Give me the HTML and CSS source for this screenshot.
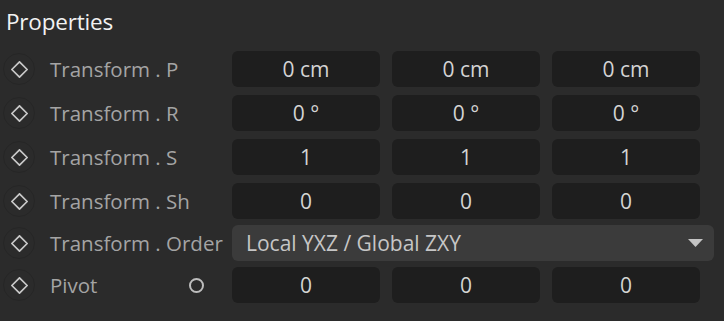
FILE: index.html
```html
<!DOCTYPE html>
<html lang="en">
<head>
  <meta charset="UTF-8">
  <title>Properties</title>
  <link rel="stylesheet" href="styles.css">
</head>
<body>
<div class="panel">
  <h1 class="titulo">Properties</h1>

  <div class="linha">
    <span class="chave"><svg viewBox="0 0 16 16"><path d="M8 0.8 L15.2 8 L8 15.2 L0.8 8 Z"/></svg></span>
    <span class="rotulo">Transform . P</span>
    <div class="campos">
      <div class="campo">0 cm</div>
      <div class="campo">0 cm</div>
      <div class="campo">0 cm</div>
    </div>
  </div>

  <div class="linha">
    <span class="chave"><svg viewBox="0 0 16 16"><path d="M8 0.8 L15.2 8 L8 15.2 L0.8 8 Z"/></svg></span>
    <span class="rotulo">Transform . R</span>
    <div class="campos">
      <div class="campo">0 °</div>
      <div class="campo">0 °</div>
      <div class="campo">0 °</div>
    </div>
  </div>

  <div class="linha">
    <span class="chave"><svg viewBox="0 0 16 16"><path d="M8 0.8 L15.2 8 L8 15.2 L0.8 8 Z"/></svg></span>
    <span class="rotulo">Transform . S</span>
    <div class="campos">
      <div class="campo">1</div>
      <div class="campo">1</div>
      <div class="campo">1</div>
    </div>
  </div>

  <div class="linha">
    <span class="chave"><svg viewBox="0 0 16 16"><path d="M8 0.8 L15.2 8 L8 15.2 L0.8 8 Z"/></svg></span>
    <span class="rotulo">Transform . Sh</span>
    <div class="campos">
      <div class="campo">0</div>
      <div class="campo">0</div>
      <div class="campo">0</div>
    </div>
  </div>

  <div class="linha apertada">
    <span class="chave"><svg viewBox="0 0 16 16"><path d="M8 0.8 L15.2 8 L8 15.2 L0.8 8 Z"/></svg></span>
    <span class="rotulo">Transform . Order</span>
    <div class="seletor">
      <span>Local YXZ / Global ZXY</span>
      <svg class="seta" viewBox="0 0 15 8"><path d="M0 0 H15 L7.5 8 Z"/></svg>
    </div>
  </div>

  <div class="linha apertada">
    <span class="chave"><svg viewBox="0 0 16 16"><path d="M8 0.8 L15.2 8 L8 15.2 L0.8 8 Z"/></svg></span>
    <span class="rotulo">Pivot <span class="anel"></span></span>
    <div class="campos">
      <div class="campo">0</div>
      <div class="campo">0</div>
      <div class="campo">0</div>
    </div>
  </div>
</div>
</body>
</html>
```

FILE: styles.css
```css
body {
  margin: 0;
  background: #2b2b2b;
  font-family: "Open Sans", "Noto Sans", sans-serif;
}
.panel {
  padding: 8px 0 0 0;
}
.titulo {
  margin: 0 0 15px 6px;
  font-size: 22.5px;
  font-weight: normal;
  color: #f2f2f2;
  line-height: 28px;
  letter-spacing: -0.2px;
}
.linha {
  display: flex;
  align-items: center;
  height: 36px;
  margin-bottom: 8px;
}
.linha.apertada {
  margin-top: -2px;
}
.chave {
  width: 32px;
  height: 32px;
  margin-left: 3px;
  border-radius: 50%;
  border: 1px solid #262626;
  box-sizing: border-box;
  display: flex;
  align-items: center;
  justify-content: center;
}
.chave svg {
  width: 17px;
  height: 17px;
  fill: none;
  stroke: #c9c9c9;
  stroke-width: 1.6;
}
.rotulo {
  width: 182px;
  margin-left: 15px;
  display: flex;
  align-items: center;
  font-size: 20.5px;
  color: #a4a4a4;
  white-space: nowrap;
}
.anel {
  width: 15px;
  height: 15px;
  box-sizing: border-box;
  border: 2.5px solid #bdbdbd;
  border-radius: 50%;
  margin-left: auto;
  margin-right: 28px;
}
.campos {
  display: grid;
  grid-template-columns: repeat(3, 148px);
  gap: 12px;
}
.campo {
  height: 36px;
  background: #1e1e1e;
  border-radius: 6px;
  color: #d4d4d4;
  font-size: 21px;
  display: flex;
  align-items: center;
  justify-content: center;
}
.seletor {
  width: 482px;
  height: 36px;
  background: #3b3b3b;
  border-radius: 6px;
  box-sizing: border-box;
  padding: 0 11px 0 14px;
  display: flex;
  align-items: center;
  justify-content: space-between;
  font-size: 21px;
  color: #c6c6c6;
}
.seta {
  width: 15px;
  height: 8px;
  fill: #c4c4c4;
}
```
